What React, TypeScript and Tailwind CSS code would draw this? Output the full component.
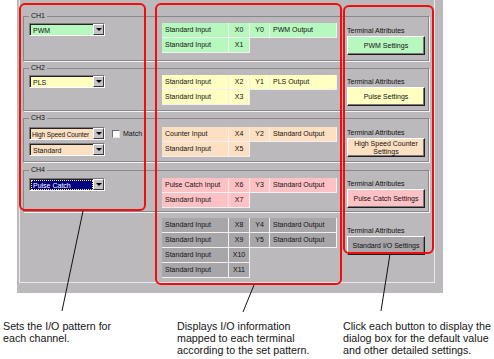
import type { ReactNode } from "react";

const GREEN = "bg-[#b7f8bf]";
const YELLOW = "bg-[#ffffc2]";
const ORANGE = "bg-[#fde0c1]";
const PINK = "bg-[#ffc1c4]";
const GRAY = "bg-[#a9a6aa]";

type RowData = [string, string, string?, string?];

function Combo({ text, color, selected, tight }: { text: string; color: string; selected?: boolean; tight?: boolean }) {
  return (
    <div className="flex w-[76px] h-[13px] border border-t-[#7c797d] border-l-[#7c797d] border-r-white border-b-white">
      <div className={`flex-1 min-w-0 overflow-hidden whitespace-nowrap border-t border-l border-[#222] ${color}`}>
        {selected ? (
          <div className="h-full border border-dotted border-[#f6f27a] bg-[#000080] text-white leading-[9px] px-[1px]">{text}</div>
        ) : (
          <div className={`leading-[11px] ${tight ? "pl-[1px] text-[6.5px] tracking-[-0.1px]" : "px-[2px]"}`}>{text}</div>
        )}
      </div>
      <div className="w-[11px] h-full bg-[#c6c3c7] border border-t-white border-l-white border-r-[#3a383b] border-b-[#3a383b] flex items-center justify-center">
        <div className="w-0 h-0 border-l-[3px] border-r-[3px] border-t-[3px] border-l-transparent border-r-transparent border-t-black" />
      </div>
    </div>
  );
}

function Cell({ children, w, color, center }: { children?: ReactNode; w: string; color: string; center?: boolean }) {
  return (
    <div className={`${w} h-[15px] border-r border-b border-[#f1f0f2] ${color} leading-[14px] whitespace-nowrap overflow-hidden ${center ? "text-center" : "px-[3px]"}`}>
      {children}
    </div>
  );
}

function IoTable({ rows, color }: { rows: RowData[]; color: string }) {
  return (
    <div className="flex flex-col w-[185px]">
      {rows.map((r, i) => (
        <div key={i} className="flex">
          <Cell w="w-[67px]" color={color}>{r[0]}</Cell>
          <Cell w="w-[21px]" color={color} center>{r[1]}</Cell>
          {r[2] && <Cell w="w-[20px]" color={color} center>{r[2]}</Cell>}
          {r[3] && <Cell w="w-[67px]" color={color}>{r[3]}</Cell>}
        </div>
      ))}
    </div>
  );
}

function Attr({ label, color, top }: { label: ReactNode; color: string; top: string }) {
  return (
    <div className={`flex flex-col w-[78px] ${top}`}>
      <div className="h-[8px] leading-[8px] mb-[1px] whitespace-nowrap">Terminal Attributes</div>
      <div className={`h-[19px] w-[78px] border border-t-white border-l-white border-r-[#1e1e1e] border-b-[#1e1e1e] shadow-[inset_-1px_-1px_0_#7c797d] ${color} flex items-center justify-center text-center leading-[8px]`}>
        {label}
      </div>
    </div>
  );
}

function Group({ label, h, mt, children }: { label: string; h: string; mt: string; children: ReactNode }) {
  return (
    <fieldset className={`ml-[3px] w-[406px] ${h} ${mt} border border-[#8b888c] shadow-[1px_1px_0_#f3f3f3]`}>
      <legend className="ml-[5px] px-[2px] leading-[8px] bg-[#bcb9bd]">{label}</legend>
      <div className="flex">{children}</div>
    </fieldset>
  );
}

export default function App() {
  return (
    <div className="relative w-[494px] h-[359px] bg-white overflow-hidden font-['Liberation_Sans',Arial,sans-serif] text-black">
      <div className="ml-[17px] w-[426px] h-[293px] bg-[#bcb9bd]">
        <div className="ml-[2px] w-[416px] h-[283px] border-l border-r border-b border-[#e9e8ea] pt-[12px] text-[7px] text-[#111]">
          {/* CH1 */}
          <Group label="CH1" h="h-[49px]" mt="mt-0">
            <div className="w-[138px] pl-[5px] pt-[3px]">
              <Combo text="PWM" color={GREEN} />
            </div>
            <div className="pt-[3px]">
              <IoTable color={GREEN} rows={[["Standard Input", "X0", "Y0", "PWM Output"], ["Standard Input", "X1"]]} />
            </div>
            <Attr label="PWM Settings" color={GREEN} top="pt-[7px]" />
          </Group>

          {/* CH2 */}
          <Group label="CH2" h="h-[47px]" mt="mt-[3px]">
            <div className="w-[138px] pl-[5px] pt-[3px]">
              <Combo text="PLS" color={YELLOW} />
            </div>
            <div className="pt-[3px]">
              <IoTable color={YELLOW} rows={[["Standard Input", "X2", "Y1", "PLS Output"], ["Standard Input", "X3"]]} />
            </div>
            <Attr label="Pulse Settings" color={YELLOW} top="pt-[6px]" />
          </Group>

          {/* CH3 */}
          <Group label="CH3" h="h-[48px]" mt="mt-[3px]">
            <div className="w-[138px] pl-[5px] pt-[5px] flex flex-col gap-[3px]">
              <div className="flex items-center">
                <Combo text="High Speed Counter" color={ORANGE} tight />
                <div className="ml-[7px] w-[8px] h-[8px] bg-white border border-t-[#6f6c70] border-l-[#6f6c70] border-r-[#e6e6e6] border-b-[#e6e6e6]" />
                <span className="ml-[3px] leading-[8px]">Match</span>
              </div>
              <Combo text="Standard" color={ORANGE} />
            </div>
            <div className="pt-[5px]">
              <IoTable color={ORANGE} rows={[["Counter Input", "X4", "Y2", "Standard Output"], ["Standard Input", "X5"]]} />
            </div>
            <Attr label={<span>High Speed Counter<br />Settings</span>} color={ORANGE} top="pt-[7px]" />
          </Group>

          {/* CH4 */}
          <Group label="CH4" h="h-[46px]" mt="mt-[4px]">
            <div className="w-[138px] pl-[5px] pt-[4px]">
              <Combo text="Pulse Catch" color={PINK} selected />
            </div>
            <div className="pt-[4px]">
              <IoTable color={PINK} rows={[["Pulse Catch Input", "X6", "Y3", "Standard Output"], ["Standard Input", "X7"]]} />
            </div>
            <Attr label="Pulse Catch Settings" color={PINK} top="pt-[6px]" />
          </Group>

          {/* standard terminals */}
          <div className="ml-[3px] w-[406px] border border-transparent flex pt-[5px]">
            <div className="w-[138px]" />
            <IoTable
              color={GRAY}
              rows={[
                ["Standard Input", "X8", "Y4", "Standard Output"],
                ["Standard Input", "X9", "Y5", "Standard Output"],
                ["Standard Input", "X10"],
                ["Standard Input", "X11"],
              ]}
            />
            <Attr label="Standard I/O Settings" color={GRAY} top="pt-[9px]" />
          </div>
        </div>
      </div>

      <div className="flex mt-[27px] text-[10.7px] leading-[12px] text-[#151515]">
        <div className="ml-[3px] w-[174px]">Sets the I/O pattern for<br />each channel.</div>
        <div className="w-[166px]">Displays I/O information<br />mapped to each terminal<br />according to the set pattern.</div>
        <div className="flex-1">Click each button to display the<br />dialog box for the default value<br />and other detailed settings.</div>
      </div>

      {/* annotation overlay */}
      <svg className="absolute inset-0 pointer-events-none" width="494" height="359" viewBox="0 0 494 359">
        <g fill="none" stroke="#f20c0c" strokeWidth="2">
          <rect x="20" y="4" width="125" height="206" rx="5" />
          <rect x="156" y="4" width="185" height="280" rx="5" />
          <rect x="344" y="6" width="89" height="247" rx="5" />
        </g>
        <g stroke="#111" strokeWidth="1">
          <line x1="83" y1="211" x2="62" y2="311" />
          <line x1="254" y1="285" x2="243" y2="312" />
          <line x1="390" y1="254" x2="381" y2="311" />
        </g>
      </svg>
    </div>
  );
}
